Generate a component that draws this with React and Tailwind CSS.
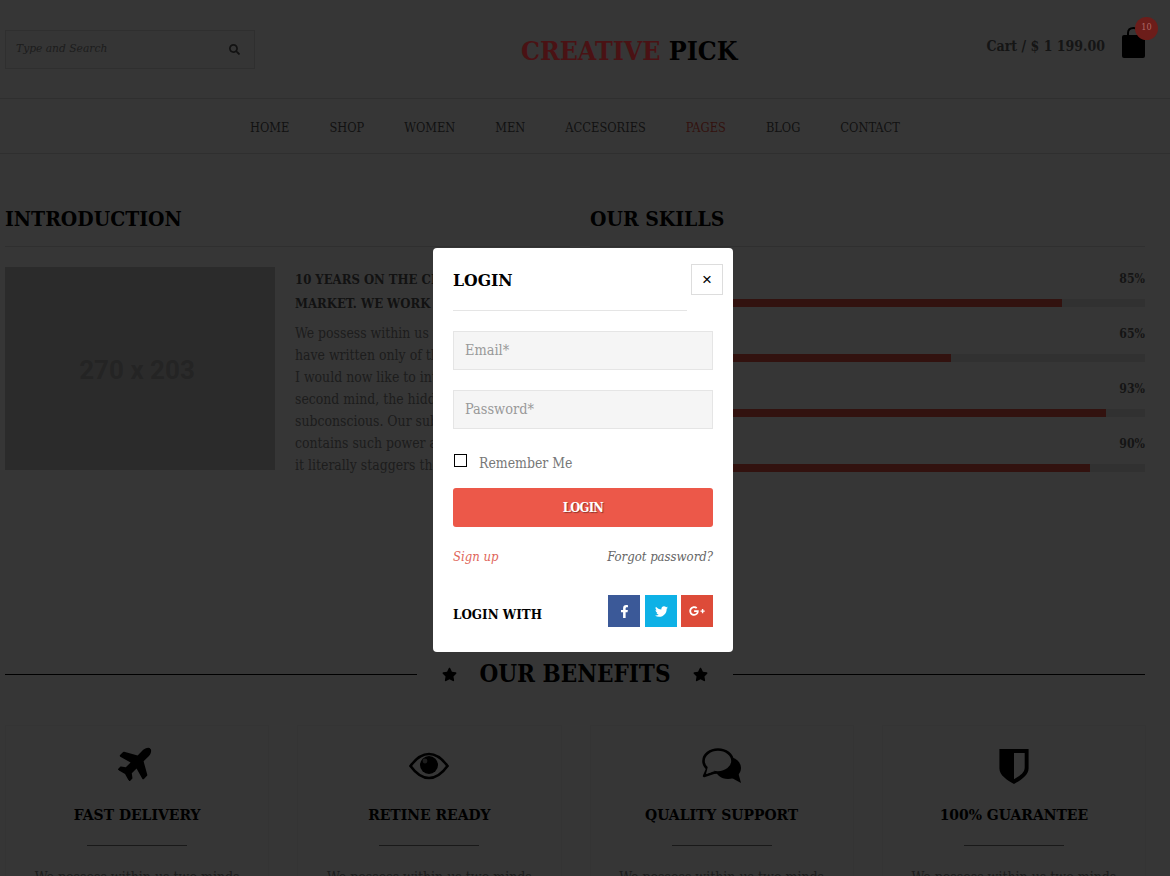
import React from 'react';
import { FaSearch, FaPlane, FaFacebookF, FaTwitter, FaGooglePlusG, FaStar } from 'react-icons/fa';

const navItems = ['HOME', 'SHOP', 'WOMEN', 'MEN', 'ACCESORIES', 'PAGES', 'BLOG', 'CONTACT'];
const skills = [85, 65, 93, 90];

function ShieldIcon() {
    return (
        <svg viewBox="0 0 30 36" className="h-[35px] w-[30px] fill-black">
            <path fillRule="evenodd" d="M0 0H30V20C30 27 22 32 15 36C8 32 0 27 0 20ZM15 4V31C20 28 26 25 26 19V4Z" />
        </svg>
    );
}

function EyeIcon() {
    return (
        <svg viewBox="0 0 40 28" className="h-[28px] w-[40px]">
            <path d="M1.5 14C8 5 14 2 20 2S32 5 38.5 14C32 23 26 26 20 26S8 23 1.5 14Z" fill="none" stroke="#000" strokeWidth="2.6" />
            <circle cx="20" cy="13" r="9" fill="#000" />
            <circle cx="16" cy="9" r="2.4" fill="#888" />
        </svg>
    );
}

function CommentsIcon() {
    return (
        <svg viewBox="0 0 40 36" className="h-[36px] w-[40px]">
            <ellipse cx="26" cy="20" rx="13" ry="11" fill="#000" />
            <path d="M28 29L39 35L36 24Z" fill="#000" />
            <path d="M6 19L2 28L14 24Z" fill="#fdfdfd" stroke="#000" strokeWidth="2.4" strokeLinejoin="round" />
            <ellipse cx="16" cy="13" rx="14.5" ry="11.5" fill="#fdfdfd" stroke="#000" strokeWidth="2.6" />
            <path d="M6 18L4 26L13 23Z" fill="#fdfdfd" />
        </svg>
    );
}

const benefits = [
    { title: 'FAST DELIVERY', icon: <FaPlane className="-mt-2 -rotate-45 text-[38px] text-black" /> },
    { title: 'RETINE READY', icon: <EyeIcon /> },
    { title: 'QUALITY SUPPORT', icon: <CommentsIcon /> },
    { title: '100% GUARANTEE', icon: <ShieldIcon /> },
];

function BagIcon() {
    return (
        <svg viewBox="0 0 23 31" className="h-[31px] w-[23px]">
            <path d="M6 9V6C6 3 8 1 11.5 1S17 3 17 6V9" fill="none" stroke="#000" strokeWidth="2" />
            <rect x="0" y="8" width="23" height="23" rx="2" fill="#000" />
        </svg>
    );
}

export default function App() {
    return (
        <div className="relative h-[876px] overflow-hidden bg-white font-['DejaVu_Serif_Condensed','DejaVu_Serif',serif] text-[#777]">
            <header className="flex h-[99px] items-center justify-between border-b border-[#ddd] pl-[5px] pr-[25px]">
                <div className="flex h-[39px] w-[250px] items-center justify-between border border-[#ddd] bg-[#fafafa] pl-2.5 pr-[14px]">
                    <span className="text-[11.9px] italic text-[#888]">Type and Search</span>
                    <FaSearch className="text-[11px] text-[#555]" />
                </div>
                <div className="ml-[17px] mt-[4px] text-[26.5px] font-bold text-black">
                    <span className="relative z-10 text-[#4a1214]">CREATIVE</span> PICK
                </div>
                <div className="mb-[14px] flex h-[31px] items-start">
                    <span className="mt-[9px] text-[14px] font-bold leading-5 text-[#666]">Cart / $ 1 199.00</span>
                    <div className="relative ml-[17px]">
                        <BagIcon />
                        <span className="absolute -right-[13px] -top-[10px] z-10 flex h-[23px] w-[23px] items-center justify-center rounded-full bg-[#6c1d1a] text-[9px] text-[#b06a66]">10</span>
                    </div>
                </div>
            </header>

            <nav className="flex h-[55px] items-center justify-center gap-10 border-b border-[#ddd] pr-5 pt-[3px] text-[12.7px] text-[#555]">
                {navItems.map(item => (
                    <span key={item} className={item === 'PAGES' ? 'text-[#ec5849]' : ''}>{item}</span>
                ))}
            </nav>

            <main className="w-[1145px] pl-[5px] pt-[50px]">
                <div className="flex gap-5">
                    <section className="w-[565px]">
                        <h2 className="border-b border-[#ddd] pb-[12px] text-[21px] font-bold leading-[30px] text-black">INTRODUCTION</h2>
                        <div className="mt-5 flex gap-5">
                            <div className="flex h-[203px] w-[270px] items-center justify-center bg-[#ccc] pr-[6px] pt-[4px] font-['Roboto',sans-serif] text-[26px] font-bold text-[#a8a8a8]">270 x 203</div>
                            <div className="min-w-0 flex-1 whitespace-nowrap pt-px">
                                <h3 className="text-[13px] font-bold leading-6 text-[#555]">10 YEARS ON THE CREATIVE<br />MARKET. WE WORK FOR YOU</h3>
                                <p className="mt-[6px] text-[13.9px] leading-[22px] text-[#888]">
                                    We possess within us two minds. So far I<br />
                                    have written only of the conscious mind.<br />
                                    I would now like to introduce you to your<br />
                                    second mind, the hidden and mysterious<br />
                                    subconscious. Our subconscious mind<br />
                                    contains such power and complexity that<br />
                                    it literally staggers the imagination.
                                </p>
                            </div>
                        </div>
                    </section>
                    <section className="flex-1">
                        <h2 className="border-b border-[#ddd] pb-[12px] text-[21px] font-bold leading-[30px] text-black">OUR SKILLS</h2>
                        <div className="mt-[24px] flex flex-col gap-[19px]">
                            {skills.map(s => (
                                <div key={s}>
                                    <div className="text-right text-[12.2px] font-bold leading-[16px] text-[#666]">{s}%</div>
                                    <div className="mt-[12px] h-2 bg-[#e5e5e5]">
                                        <div className="h-full bg-[#ec5849]" style={{ width: `${s}%` }} />
                                    </div>
                                </div>
                            ))}
                        </div>
                    </section>
                </div>

                <div className="mt-[180px] flex items-center">
                    <div className="h-px flex-1 bg-black" />
                    <div className="mx-[25px] flex w-[266px] items-center justify-between text-black">
                        <FaStar className="text-[15px]" />
                        <span className="text-[24px] font-bold leading-[36px]">OUR BENEFITS</span>
                        <FaStar className="text-[15px]" />
                    </div>
                    <div className="h-px flex-1 bg-black" />
                </div>

                <div className="mt-[33px] grid w-[1141px] grid-cols-4 gap-[28px]">
                    {benefits.map(b => (
                        <div key={b.title} className="flex h-[200px] flex-col items-center border border-[#f3f3f3] bg-[#fdfdfd] pt-[20px]">
                            <div className="flex h-[40px] items-center">{b.icon}</div>
                            <h4 className="mt-[17px] text-[15.5px] font-bold leading-[24px] text-black">{b.title}</h4>
                            <div className="mt-[18px] h-px w-[100px] bg-[#777]" />
                            <p className="mt-[20px] text-[14px] leading-[22px] text-[#888]">We possess within us two minds</p>
                        </div>
                    ))}
                </div>
            </main>

            <div className="absolute inset-0 bg-[rgba(0,0,0,0.79)]" />

            <div className="absolute left-[433px] top-[248px] z-20 h-[404px] w-[300px] rounded-[4px] bg-white p-5">
                <div className="relative">
                    <h3 className="w-[234px] border-b border-[#e5e5e5] pb-[18px] text-[17.4px] font-bold leading-[24px] text-black">LOGIN</h3>
                    <button className="absolute -right-[10px] -top-1 flex h-[31px] w-[32px] items-center justify-center border border-[#ddd] font-['Liberation_Sans',sans-serif] text-[17px] text-black">×</button>
                </div>
                <div className="mt-5 flex h-[39px] items-center border border-[#e5e5e5] bg-[#f5f5f5] px-[11px] text-[14.4px] text-[#999]">Email*</div>
                <div className="mt-5 flex h-[39px] items-center border border-[#e5e5e5] bg-[#f5f5f5] px-[11px] text-[14.4px] text-[#999]">Password*</div>
                <label className="mt-[25px] flex items-start pl-px text-[13.9px] leading-[18px] text-[#777]">
                    <span className="h-[13px] w-[13px] border border-black" />
                    <span className="ml-3">Remember Me</span>
                </label>
                <button className="mt-[16px] h-[39px] w-full rounded-[3px] bg-[#ec5849] pt-px text-[12.8px] font-bold tracking-[-0.7px] text-white [text-shadow:1px_1px_1px_rgba(0,0,0,0.4)]">LOGIN</button>
                <div className="mt-[20px] flex justify-between text-[13px] italic leading-5">
                    <span className="text-[#e0665a]">Sign up</span>
                    <span className="text-[#666]">Forgot password?</span>
                </div>
                <div className="mt-[28px] flex items-start justify-between">
                    <span className="mt-[10px] text-[13.3px] font-bold leading-5 text-black">LOGIN WITH</span>
                    <div className="flex">
                        <span className="mr-[5px] flex h-8 w-8 items-center justify-center bg-[#3b5998] text-[13px] text-white"><FaFacebookF /></span>
                        <span className="mr-[4px] flex h-8 w-8 items-center justify-center bg-[#0eb1e6] text-[13px] text-white"><FaTwitter /></span>
                        <span className="flex h-8 w-8 items-center justify-center bg-[#dd4b39] text-[16px] text-white"><FaGooglePlusG /></span>
                    </div>
                </div>
            </div>
        </div>
    );
}
